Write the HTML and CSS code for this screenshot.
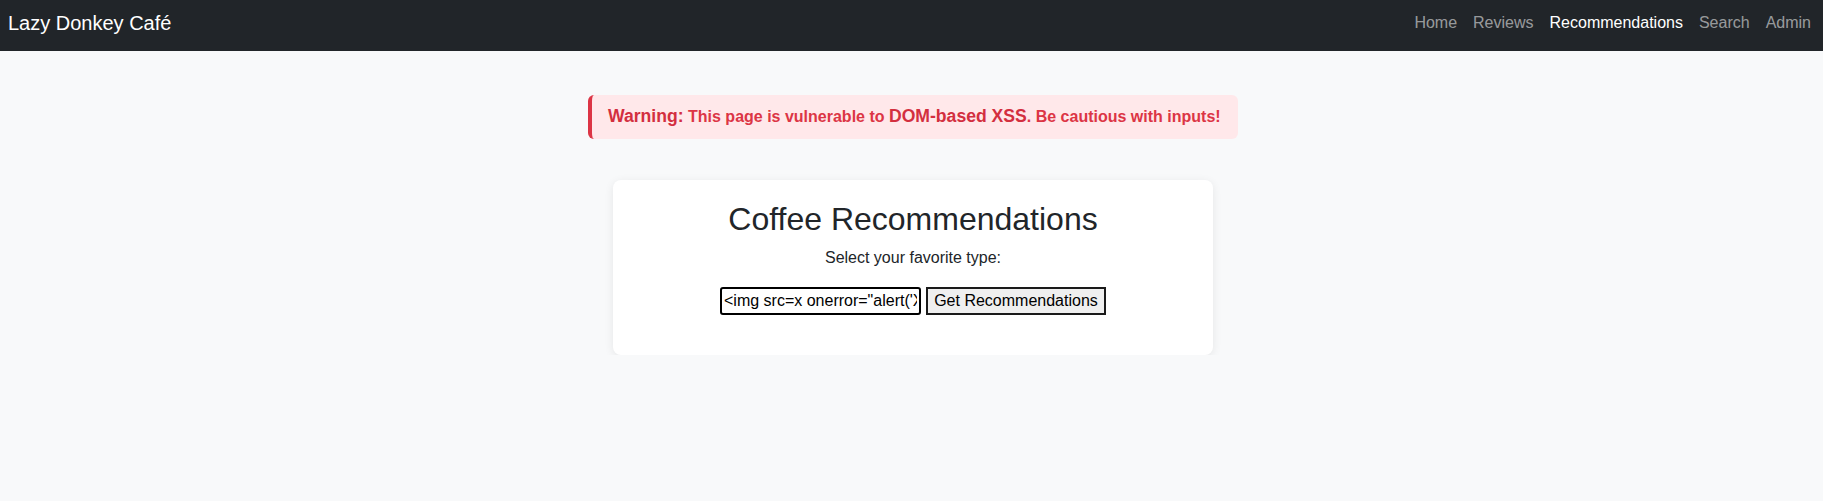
FILE: index.html
```html
<!DOCTYPE html>
<html lang="en">
<head>
<meta charset="utf-8">
<title>Coffee Recommendations - Lazy Donkey Café</title>
<link rel="stylesheet" href="styles.css">
</head>
<body>
<nav class="navbar">
  <a class="brand" href="#">Lazy Donkey Café</a>
  <ul class="nav">
    <li><a class="nav-link" href="#">Home</a></li>
    <li><a class="nav-link" href="#">Reviews</a></li>
    <li><a class="nav-link active" href="#">Recommendations</a></li>
    <li><a class="nav-link" href="#">Search</a></li>
    <li><a class="nav-link last" href="#">Admin</a></li>
  </ul>
</nav>
<main class="main">
  <div class="alert"><strong>Warning:</strong> This page is vulnerable to <strong>DOM-based XSS</strong>. Be cautious with inputs!</div>
  <section class="card">
    <h2 class="title">Coffee Recommendations</h2>
    <p class="subtitle">Select your favorite type:</p>
    <form class="form">
      <input class="input" type="text" value="&lt;img src=x onerror=&quot;alert('XSS')&quot;&gt;">
      <button class="btn" type="button">Get Recommendations</button>
    </form>
  </section>
</main>
</body>
</html>
```
FILE: styles.css
```css
* { box-sizing: border-box; }
body {
  margin: 0;
  background: #f8f9fa;
  font-family: "Liberation Sans", Arial, sans-serif;
  font-size: 16px;
  color: #212529;
}
.navbar {
  height: 51px;
  background: #212529;
  display: flex;
  align-items: center;
  justify-content: space-between;
  padding: 0 12px 5px 8px;
}
.brand {
  color: #fff;
  font-size: 20px;
  text-decoration: none;
}
.nav {
  list-style: none;
  margin: 0;
  padding: 0;
  display: flex;
}
.nav-link {
  display: block;
  padding: 8px;
  color: rgba(255,255,255,.55);
  text-decoration: none;
  font-size: 16px;
}
.nav-link.last { padding-right: 0; }
.nav-link.active { color: #fff; }
.main {
  display: flex;
  flex-direction: column;
  align-items: center;
  padding-top: 44px;
}
.alert {
  width: 650px;
  height: 44px;
  padding: 12px 16px;
  line-height: 20px;
  background: #ffe8ea;
  color: #dc3545;
  font-weight: 700;
  border-left: 4px solid #dc3545;
  border-radius: 6px;
  margin-left: 3px;
}
.alert strong {
  color: #d32f3f;
  font-size: 1.1em;
  line-height: 16px;
}
.card {
  width: 600px;
  margin-top: 41px;
  margin-left: 3px;
  background: #fff;
  border-radius: 8px;
  box-shadow: 0 2px 10px rgba(0,0,0,.08);
  padding: 20px;
  text-align: center;
}
.title {
  margin: 0 0 8px;
  font-size: 32px;
  line-height: 38px;
  font-weight: 400;
}
.subtitle {
  margin: 0 0 17px;
  line-height: 24px;
}
.form {
  margin: 0 0 20px;
  display: flex;
  justify-content: center;
  gap: 5px;
}
.input {
  width: 201px;
  height: 28px;
  border: 2px solid #000;
  border-radius: 3px;
  padding: 0 2px;
  font-family: "Liberation Sans", Arial, sans-serif;
  font-size: 16px;
  color: #000;
  background: #fff;
}
.btn {
  width: 180px;
  height: 28px;
  border: 2px solid #1a1a1a;
  border-radius: 0;
  background: #efefef;
  padding: 0;
  font-family: "Liberation Sans", Arial, sans-serif;
  font-size: 16px;
  color: #000;
}
```
